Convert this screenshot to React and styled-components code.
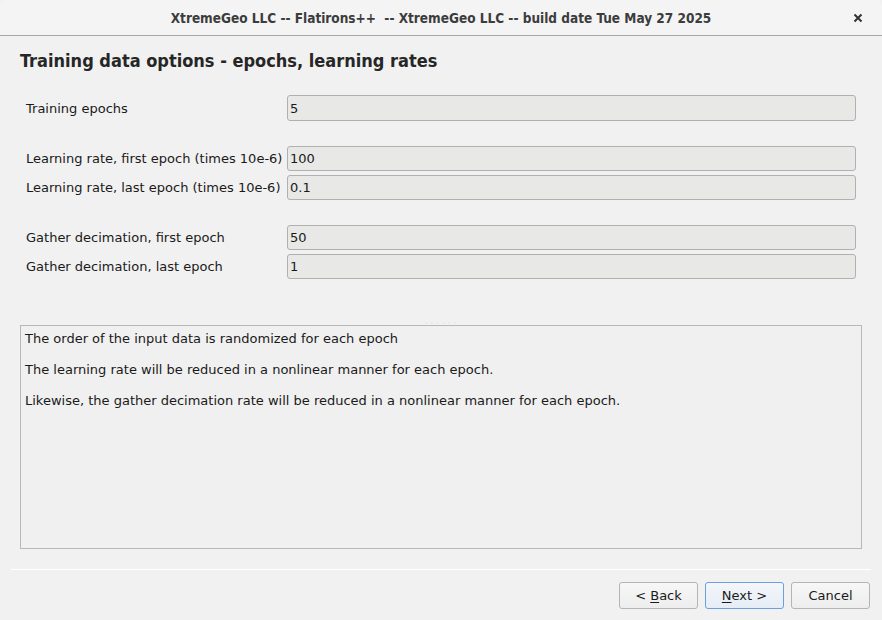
import React from "react";
import styled, { createGlobalStyle } from "styled-components";

const Global = createGlobalStyle`
	html, body {
		margin: 0;
		padding: 0;
		background: #f1f1f1;
	}
	* {
		box-sizing: border-box;
	}
`;

const Window = styled.div`
	width: 882px;
	height: 620px;
	display: flex;
	flex-direction: column;
	background: #f1f1f1;
	font-family: "DejaVu Sans", "Liberation Sans", sans-serif;
	font-size: 13px;
	color: #1a1a1a;
	overflow: hidden;
	border-radius: 6px 6px 0 0;
`;

const TitleBar = styled.div`
	height: 36px;
	flex: none;
	display: flex;
	align-items: center;
	justify-content: center;
	position: relative;
	background: #f4f4f4;
	border-bottom: 1px solid #a8a8a8;
	font-family: "DejaVu Sans Condensed", "DejaVu Sans", sans-serif;
	font-weight: bold;
	font-size: 13.5px;
	color: #3c3c3c;
`;

const Close = styled.span`
	position: absolute;
	right: 18px;
	top: 11px;
	width: 12px;
	height: 12px;
`;

const Body = styled.div`
	flex: 1;
	display: flex;
	flex-direction: column;
	padding: 14px 20px 0 20px;
`;

const Heading = styled.h1`
	margin: 0 0 23px 0;
	font-family: "DejaVu Sans Condensed", "DejaVu Sans", sans-serif;
	font-weight: bold;
	font-size: 18px;
	color: #262626;
	line-height: 22px;
`;

const Form = styled.div`
	display: flex;
	flex-direction: column;
	padding-left: 6px;
	padding-right: 6px;
`;

const Group = styled.div`
	display: flex;
	flex-direction: column;
	gap: 4px;
	margin-bottom: 25px;
`;

const Row = styled.div`
	display: flex;
	align-items: center;
	height: ${(p) => p.$h || 25}px;
`;

const Label = styled.span`
	width: 261px;
	flex: none;
	white-space: nowrap;
`;

const Field = styled.div`
	flex: 1;
	height: 100%;
	display: flex;
	align-items: center;
	padding-left: 2px;
	background: #e8e8e7;
	border: 1px solid #b0b0b0;
	border-radius: 3px;
	color: #1a1a1a;
`;

const Handle = styled.div`
	height: 20px;
	display: flex;
	justify-content: center;
	align-items: flex-end;
	padding-bottom: 1px;
	margin-top: 1px;
	color: #bbb;
	font-size: 6px;
	letter-spacing: 1px;
	line-height: 3px;
`;

const Notes = styled.div`
	height: 224px;
	border: 1px solid #b8b8b8;
	background: #f0f0f0;
	padding: 4px 4px;
	display: flex;
	flex-direction: column;
	gap: 13px;
	line-height: 18px;
`;

const Divider = styled.div`
	height: 1px;
	background: #ffffff;
	margin: 20px -9px 0 -9px;
`;

const Footer = styled.div`
	display: flex;
	justify-content: flex-end;
	gap: 7px;
	padding-top: 12px;
	margin-right: -8px;
`;

const Button = styled.button`
	width: 79px;
	height: 27px;
	font-family: "DejaVu Sans", "Liberation Sans", sans-serif;
	font-size: 13px;
	color: #1a1a1a;
	border-radius: 3px;
	border: 1px solid ${(p) => (p.$primary ? "#6aa0dc" : "#b4b4b4")};
	background: ${(p) =>
		p.$primary
			? "linear-gradient(#f3f6fa, #e6edf5)"
			: "linear-gradient(#f7f7f7, #ededed)"};
	padding: 0;

	u {
		text-underline-offset: 2px;
	}
`;

const fields = [
	[["Training epochs", "5", 26]],
	[
		["Learning rate, first epoch (times 10e-6)", "100"],
		["Learning rate, last epoch (times 10e-6)", "0.1"],
	],
	[
		["Gather decimation, first epoch", "50"],
		["Gather decimation, last epoch", "1"],
	],
];

const App = () => (
	<>
		<Global />
		<Window>
			<TitleBar>
				XtremeGeo LLC -- Flatirons++&nbsp; -- XtremeGeo LLC -- build date Tue May 27 2025
				<Close>
					<svg width="12" height="12" viewBox="0 0 12 12">
						<path d="M2.5 2.5 L9.5 9.5 M9.5 2.5 L2.5 9.5" stroke="#333" strokeWidth="2" />
					</svg>
				</Close>
			</TitleBar>
			<Body>
				<Heading>Training data options - epochs, learning rates</Heading>
				<Form>
					{fields.map((group, i) => (
						<Group key={i}>
							{group.map(([label, value, h]) => (
								<Row key={label} $h={h}>
									<Label>{label}</Label>
									<Field>{value}</Field>
								</Row>
							))}
						</Group>
					))}
				</Form>
				<Handle>· · · · · ·</Handle>
				<Notes>
					<div>The order of the input data is randomized for each epoch</div>
					<div>The learning rate will be reduced in a nonlinear manner for each epoch.</div>
					<div>Likewise, the gather decimation rate will be reduced in a nonlinear manner for each epoch.</div>
				</Notes>
				<Divider />
				<Footer>
					<Button>
						&lt; <u>B</u>ack
					</Button>
					<Button $primary>
						<u>N</u>ext &gt;
					</Button>
					<Button>Cancel</Button>
				</Footer>
			</Body>
		</Window>
	</>
);

export default App;
